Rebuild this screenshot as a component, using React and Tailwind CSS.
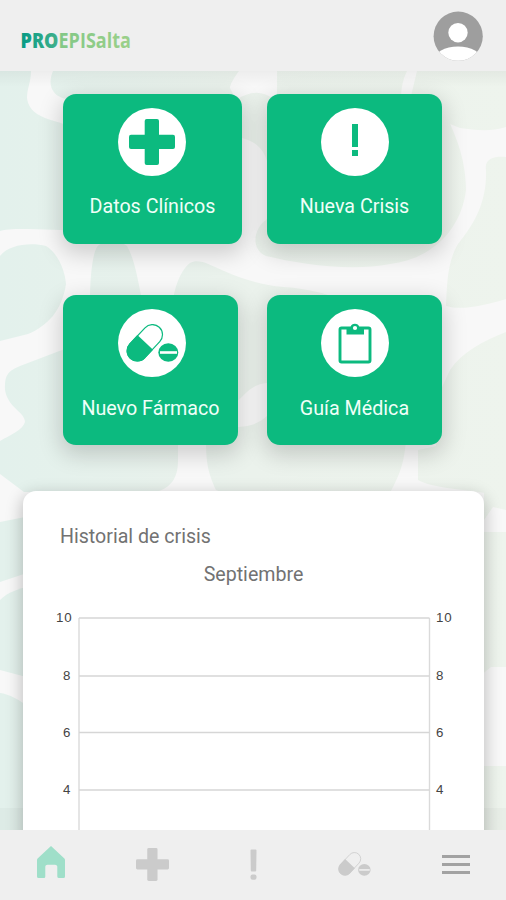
import React from "react";

const GREEN = "#0cba7f";

function Backdrop() {
  return (
    <svg className="absolute inset-0 h-full w-full" viewBox="0 71 506 759" preserveAspectRatio="none" aria-hidden="true">
      <defs>
        <linearGradient id="blob" gradientUnits="userSpaceOnUse" x1="0" y1="0" x2="506" y2="0">
          <stop offset="0" stopColor="#e3f1ec" />
          <stop offset="0.5" stopColor="#ebf2ec" />
          <stop offset="1" stopColor="#eef4ed" />
        </linearGradient>
        <linearGradient id="topShade" x1="0" y1="0" x2="0" y2="1">
          <stop offset="0" stopColor="#000" stopOpacity="0.045" />
          <stop offset="1" stopColor="#000" stopOpacity="0" />
        </linearGradient>
      </defs>
      <rect x="0" y="71" width="506" height="759" fill="#f8f8f8" />
      <g fill="url(#blob)">
        <path d="M0 71H31C31 82 27 88 27 98C29 113 42 118 61 123L100 140V235L61 230C50 230 40 229 28 229C15 229 8 229 0 231Z" />
        <path d="M53 71H239C234 78 230 84 230 88L234 96H100C60 108 44 92 53 71Z" />
        <path d="M277 71H407C403 79 401 88 401 98H277Z" />
        <path d="M417 71H506V127C490 132 475 130 460 128L430 116L411 96Z" />
        <path d="M236 100C250 91 262 90 275 100H440C449 124 466 150 466 190C462 225 437 258 390 264C350 272 300 264 266 256C250 249 254 228 266 220L280 200L268 165C264 145 250 140 242 138Z" />
        <path d="M506 157C495 156 484 158 486 170C487 200 476 222 458 244C447 262 447 286 446 306C462 311 486 305 506 299Z" />
        <path d="M0 256C8 245 30 242 46 246C59 254 65 272 66 284C62 311 47 326 28 334L0 341Z" />
        <path d="M90 300C90 280 92 255 97 247C103 240 119 240 127 246C134 258 137 275 142 300Z" />
        <path d="M173 300C176 280 184 267 190 263C199 258 210 265 224 271C245 280 262 285 284 287C310 289 325 293 340 300V383H267C250 384 244 397 232 406L190 390Z" />
        <path d="M506 332C483 341 462 352 450 370L436 400V446L418 450V480C430 487 450 488 485 493H506Z" />
        <path d="M90 340L62 350L20 366C5 372 5 378 5 390C8 408 25 412 25 422C23 430 10 435 0 441V474L24 492H157C170 487 178 480 178 460V430H90Z" />
        <path d="M206 440C206 462 208 473 216 490L240 500H386C397 480 404 468 406 440V380H300L268 415C255 427 246 426 230 428Z" />
        <path d="M0 522L30 516V572L0 582Z" />
        <path d="M0 600C8 592 18 589 30 586V678L0 670Z" />
        <path d="M0 693C9 694 20 700 30 708V808H0Z" />
        <path d="M484 488H506V510L493 507L484 520Z" />
        <path d="M480 532H506V667H491L480 676Z" />
        <path d="M480 766H506V808H480Z" />
        <rect x="0" y="808" width="506" height="22" />
      </g>
      <rect x="0" y="808" width="506" height="22" fill="#000" fillOpacity="0.025" />
      <rect x="0" y="71" width="506" height="16" fill="url(#topShade)" />
    </svg>
  );
}

function Pills({ className, color, gap }) {
  return (
    <svg className={className} viewBox="0 0 53 38" aria-hidden="true">
      <g transform="rotate(43 18.8 18.8)">
        <rect x="8.7" y="-2.4" width="20.2" height="42.4" rx="10.1" fill="none" stroke={color} strokeWidth="1.2" />
        <path d="M8.1 18.2H29.5V29.8A10.7 10.7 0 0 1 8.1 29.8Z" fill={color} />
      </g>
      <ellipse cx="42.3" cy="28.5" rx="10" ry="9.3" fill={color} />
      <rect x="34" y="27.2" width="17" height="2.6" fill={gap} />
    </svg>
  );
}

function Plus({ className }) {
  return (
    <svg className={className} viewBox="0 0 46 46" fill="currentColor" aria-hidden="true">
      <rect x="15.7" y="0" width="14.3" height="46" rx="2" />
      <rect x="0" y="15.7" width="46" height="14.3" rx="2" />
    </svg>
  );
}

function Action({ label, width, disc = "", children }) {
  return (
    <button
      className={`${width} flex h-[150px] flex-col items-center rounded-[13px] bg-[#0cba7f] pt-[14px] shadow-[0_7px_22px_3px_rgba(0,0,0,0.17)]`}
    >
      <span className={`${disc} flex h-[68px] w-[68px] items-center justify-center rounded-full bg-white text-[#0cba7f]`}>{children}</span>
      <span className="mt-[17.5px] whitespace-nowrap text-[19.7px] leading-7 text-[#effff8]">{label}</span>
    </button>
  );
}

const ticks = [
  { value: 10, y: 8 },
  { value: 8, y: 66 },
  { value: 6, y: 122.5 },
  { value: 4, y: 180 },
];

function Chart() {
  return (
    <svg className="mt-[21px] block h-[230px] w-[461px]" viewBox="0 0 461 230" fontFamily="'Liberation Sans', Arial, sans-serif" fontSize="13.3" fill="#444">
      <path d="M56 8V230M406.5 8V230" stroke="#dadada" strokeWidth="1.4" fill="none" />
      {ticks.map(({ value, y }) => (
        <g key={value}>
          <path d={`M56 ${y}H406.5`} stroke="#d6d6d6" strokeWidth="1.4" />
          <text x={value > 9 ? 33 : 40} y={y + 4} letterSpacing="0.8">{value}</text>
          <text x="413" y={y + 4} letterSpacing="0.8">{value}</text>
        </g>
      ))}
    </svg>
  );
}

export default function App() {
  return (
    <div className="flex h-[900px] w-[506px] flex-col overflow-hidden bg-[#efefef] font-['Roboto',sans-serif]">
      <header className="flex h-[71px] shrink-0 items-start justify-between bg-[#efefef] pl-[21px] pr-[23px]">
        <h1 className="mt-[28px] flex h-6 w-[112px] items-center">
          <svg className="h-6 w-[112px] overflow-visible" viewBox="0 0 112 24" fontFamily="'Open Sans', sans-serif" fontSize="20.5">
            <defs>
              <linearGradient id="brand" gradientUnits="userSpaceOnUse" x1="0" y1="0" x2="110" y2="0">
                <stop offset="0" stopColor="#079b85" />
                <stop offset="0.32" stopColor="#3daf8b" />
                <stop offset="0.36" stopColor="#83c887" />
                <stop offset="1" stopColor="#9bd08a" />
              </linearGradient>
            </defs>
            <text x="-0.5" y="19.8" fill="url(#brand)" fontWeight="700" textLength="110.5" lengthAdjust="spacingAndGlyphs">
              <tspan fontWeight="800">PRO</tspan>EPISalta
            </text>
          </svg>
        </h1>
        <svg className="mt-[11px] h-[50px] w-[50px]" viewBox="0 0 50 50" aria-label="Perfil">
          <defs>
            <clipPath id="face"><circle cx="25.2" cy="25.2" r="24.6" /></clipPath>
          </defs>
          <g clipPath="url(#face)">
            <rect width="50" height="50" fill="#9e9e9e" />
            <circle cx="25" cy="21.7" r="9.7" fill="#fff" />
            <ellipse cx="25" cy="49" rx="24" ry="13.5" fill="#fff" />
          </g>
        </svg>
      </header>

      <main className="relative h-[759px] shrink-0 overflow-hidden">
        <Backdrop />
        <div className="relative flex flex-col">
          <div className="grid grid-cols-[204px_175px] gap-y-[51.5px] pl-[63px] pt-[22.5px]">
            <Action label="Datos Clínicos" width="w-[179px]" disc="mr-px">
              <Plus className="h-[46px] w-[46px]" />
            </Action>
            <Action label="Nueva Crisis" width="w-[175px]">
              <svg className="mb-[4px] h-[34px] w-[8px]" viewBox="0 0 8 34" fill="currentColor" aria-hidden="true">
                <path d="M1 1H7V24H1ZM1 27H7V33H1Z" />
              </svg>
            </Action>
            <Action label="Nuevo Fármaco" width="w-[175px]" disc="ml-[3px]">
              <Pills className="ml-px h-[38px] w-[53px]" color={GREEN} gap="#fff" />
            </Action>
            <Action label="Guía Médica" width="w-[175px]" disc="ml-px">
              <svg className="h-[42px] w-[34px]" viewBox="0 0 34 42" aria-hidden="true">
                <rect x="2" y="6" width="30" height="34" rx="1.6" fill="none" stroke={GREEN} strokeWidth="2.9" />
                <path d="M8.5 5H12.5A4.6 4.6 0 0 1 21.3 5H26V12.5H8.5Z" fill={GREEN} />
                <circle cx="17" cy="6" r="2.1" fill="#fff" />
              </svg>
            </Action>
          </div>

          <section className="ml-[23px] mt-[45.5px] h-[400px] w-[461px] rounded-[13px] bg-white pt-[32px] text-[19.6px] leading-7 text-[#727272] shadow-[0_5px_16px_2px_rgba(0,0,0,0.22)]">
            <h2 className="pl-[37px]">Historial de crisis</h2>
            <p className="mt-[10px] text-center">Septiembre</p>
            <Chart />
          </section>
        </div>
      </main>

      <nav className="flex h-[70px] shrink-0 items-center justify-between bg-[#efefef] text-[#cbcbcb]">
        <span className="flex w-[101px] justify-center">
          <svg className="mb-[6px] h-[32px] w-[28px]" viewBox="0 0 28 32" aria-label="Inicio">
            <path d="M14 0L27.4 12.5Q28 13 28 14V30.5Q28 32 26.5 32H22Q20.3 32 20.3 30.5V20.5Q20 18.7 18 18.7H10.5Q8.3 18.7 8.3 20.5V30.5Q8.3 32 7 32H1.5Q0 32 0 30.5V14Q0 13 .6 12.5Z" fill="#9fdfc9" />
          </svg>
        </span>
        <span className="flex w-[101px] justify-center pl-[2px]"><Plus className="mb-[2px] h-[33px] w-[33px]" /></span>
        <span className="flex w-[101px] justify-center">
          <svg className="mb-[2px] h-[31px] w-[7px]" viewBox="0 0 7 31" fill="currentColor" aria-hidden="true">
            <path d="M.5 1.5Q.5.5 1.5.5H5.5Q6.5.5 6.5 1.5L6.2 21.5Q6.2 22.5 5.2 22.5H1.8Q.8 22.5.8 21.5Z" />
            <rect x=".5" y="25.5" width="6" height="5.3" rx="2" />
          </svg>
        </span>
        <span className="flex w-[101px] justify-center"><Pills className="mb-[2px] h-[24px] w-[33px]" color="#cbcbcb" gap="#efefef" /></span>
        <span className="flex w-[101px] justify-center">
          <span className="mb-[2px] flex flex-col gap-[5px]">
            <i className="block h-[3px] w-[28px] bg-[#a2a2a2]" />
            <i className="block h-[3px] w-[28px] bg-[#a2a2a2]" />
            <i className="block h-[3px] w-[28px] bg-[#a2a2a2]" />
          </span>
        </span>
      </nav>
    </div>
  );
}
